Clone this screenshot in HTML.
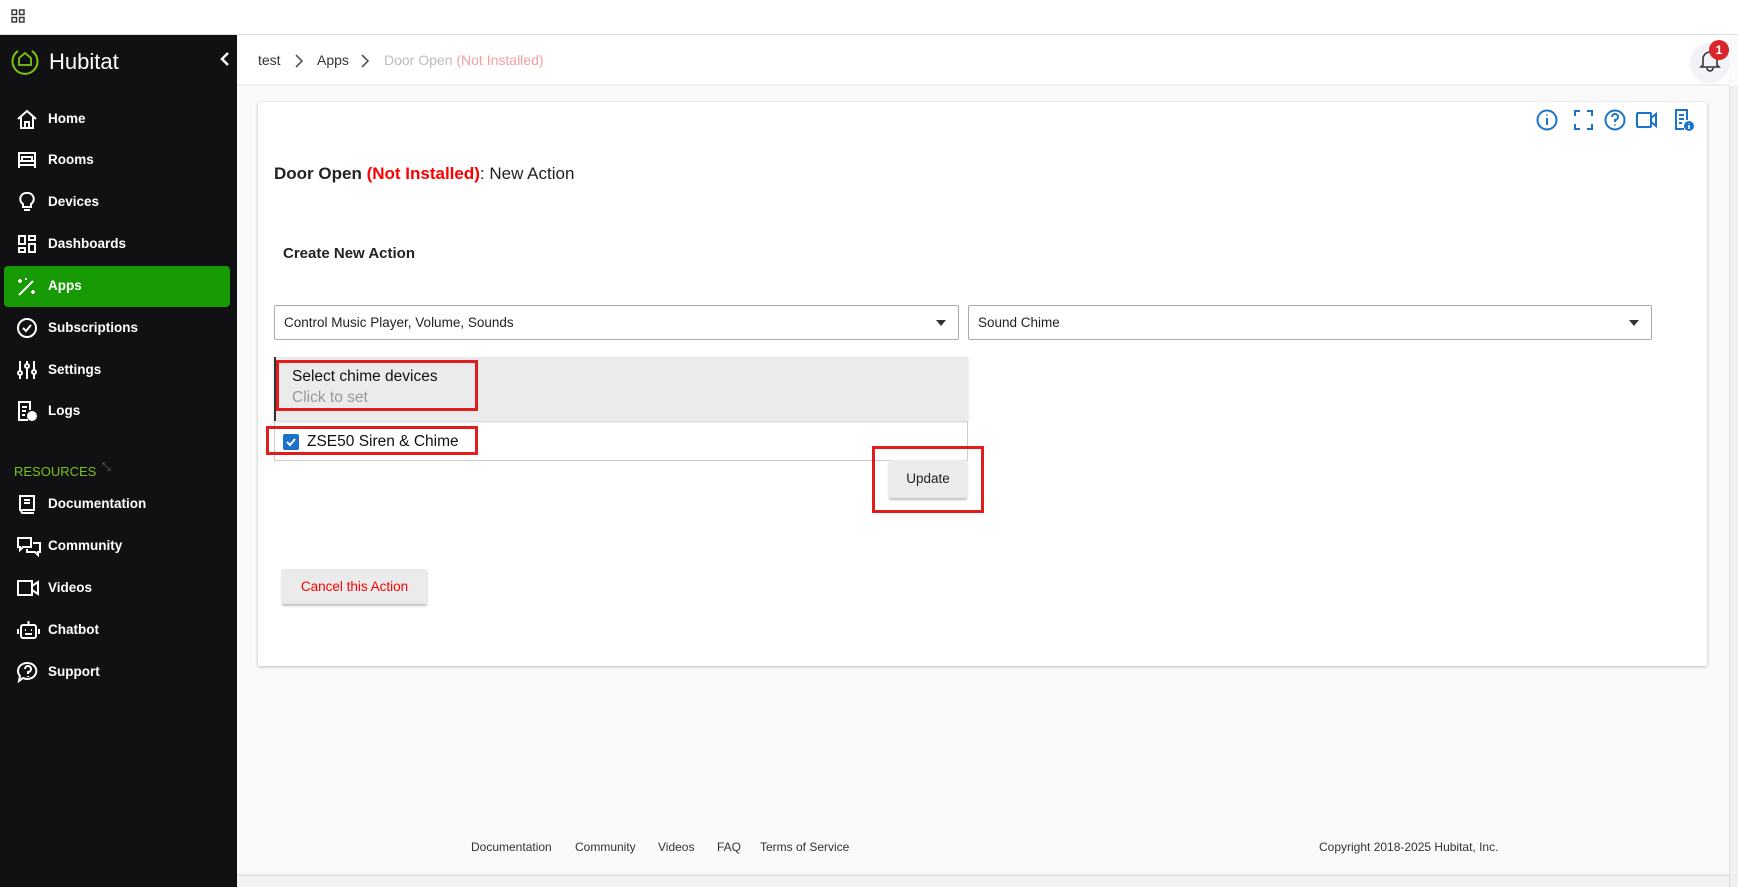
<!DOCTYPE html>
<html><head><meta charset="utf-8"><style>
*{box-sizing:border-box;margin:0;padding:0}
body{width:1738px;height:887px;overflow:hidden;background:#fafafa;font-family:"Liberation Sans",sans-serif;position:relative;color:#222}
.a{position:absolute}
#top{left:0;top:0;width:1738px;height:35px;background:#fff;border-bottom:1px solid #ddd}
#side{left:0;top:35px;width:237px;height:852px;background:#111114;color:#fff}
.nav{position:absolute;left:4px;width:226px;height:41px;border-radius:4px;font-size:13.5px;font-weight:bold;color:#fff}
.nav span{position:absolute;left:44px;top:12px}
.nav svg{position:absolute;left:12px;top:9px}
#hdr{left:237px;top:35px;width:1492px;height:51px;background:#fff;border-bottom:2px solid #eee}
#card{left:258px;top:102px;width:1449px;height:564px;background:#fff;box-shadow:0 1px 3px rgba(0,0,0,.25);border-radius:2px}
.sel{position:absolute;height:35px;border:1px solid #aaa;border-radius:2px;font-size:13.5px;padding:9px 9px}
.sel:after{content:"";position:absolute;right:12px;top:14px;border:5px solid transparent;border-top:6px solid #333}
.btn{position:absolute;background:#ebebeb;box-shadow:0 2px 2px rgba(0,0,0,.25);font-size:13.5px;text-align:center;border-radius:2px}
.red{position:absolute;border:3px solid #e11d1d}
.foot{position:absolute;top:840px;font-size:12px;color:#333}
.ic{stroke:#1a73c8;fill:none;stroke-width:2}
</style></head><body>
<div id="top" class="a"><svg class="a" style="left:11px;top:9px" width="14" height="14" viewBox="0 0 14 14" fill="none" stroke="#333" stroke-width="1.4"><rect x="1" y="1" width="4.5" height="4.5"/><rect x="8.5" y="1" width="4.5" height="4.5"/><rect x="1" y="8.5" width="4.5" height="4.5"/><rect x="8.5" y="8.5" width="4.5" height="4.5"/></svg></div>

<div id="side" class="a">
<svg class="a" style="left:10px;top:11px" width="30" height="30" viewBox="0 0 30 30" fill="none" stroke="#7ac70c" stroke-width="2"><path d="M8 5 A12.5 12.5 0 1 0 22 5"/><path d="M9 19 V12 L15 7 L21 12 V19 Z" stroke-width="1.8"/></svg>
<div class="a" style="left:49px;top:14px;font-size:22px;color:#fff">Hubitat</div>
<svg class="a" style="left:220px;top:16px" width="10" height="16" viewBox="0 0 10 16"><path d="M8 2 L2 8 L8 14" stroke="#fff" stroke-width="2.5" fill="none"/></svg>

<div class="nav" style="top:64px"><svg width="22" height="22" viewBox="0 0 22 22" fill="none" stroke="#fff" stroke-width="2"><path d="M2 11 L11 3 L20 11 M5 9 V20 H17 V9 M9 20 V14 H13 V20"/></svg><span>Home</span></div>
<div class="nav" style="top:105px"><svg width="22" height="22" viewBox="0 0 22 22" fill="none" stroke="#fff" stroke-width="2"><path d="M3 19 V4 H19 V19 M3 12 H19 M3 16 H19 M6 12 V8 H16 V12"/></svg><span>Rooms</span></div>
<div class="nav" style="top:147px"><svg width="22" height="22" viewBox="0 0 22 22" fill="none" stroke="#fff" stroke-width="2"><path d="M11 2 A6 6 0 0 0 7 13 V16 H15 V13 A6 6 0 0 0 11 2 M8 19 H14"/></svg><span>Devices</span></div>
<div class="nav" style="top:189px"><svg width="22" height="22" viewBox="0 0 22 22" fill="none" stroke="#fff" stroke-width="2"><rect x="3" y="3" width="6" height="8"/><rect x="13" y="3" width="6" height="4"/><rect x="3" y="15" width="6" height="4"/><rect x="13" y="11" width="6" height="8"/></svg><span>Dashboards</span></div>
<div class="nav" style="top:231px;background:#169b05"><svg width="22" height="22" viewBox="0 0 22 22" fill="none" stroke="#fff" stroke-width="2"><path d="M3 20 L17 6 M4 4 V8 M2 6 H6 M17 15 V19 M15 17 H19 M10 3 V5"/></svg><span>Apps</span></div>
<div class="nav" style="top:273px"><svg width="22" height="22" viewBox="0 0 22 22" fill="none" stroke="#fff" stroke-width="2"><circle cx="11" cy="11" r="9"/><path d="M7 11 L10 14 L15 8"/></svg><span>Subscriptions</span></div>
<div class="nav" style="top:315px"><svg width="22" height="22" viewBox="0 0 22 22" fill="none" stroke="#fff" stroke-width="2"><path d="M4 2 V20 M11 2 V20 M18 2 V20"/><circle cx="4" cy="14" r="2" fill="#111"/><circle cx="11" cy="7" r="2" fill="#111"/><circle cx="18" cy="13" r="2" fill="#111"/></svg><span>Settings</span></div>
<div class="nav" style="top:356px"><svg width="22" height="22" viewBox="0 0 22 22" fill="none" stroke="#fff" stroke-width="2"><path d="M12 20 H3 V2 H14 V10 M6 7 H11 M6 11 H10 M6 15 H9"/><circle cx="16" cy="16" r="4" fill="#fff"/></svg><span>Logs</span></div>
<div class="a" style="left:14px;top:429px;font-size:13px;color:#78c31a">RESOURCES</div>
<div class="a" style="left:102px;top:426px;color:#666;font-size:11px">⤡</div>
<div class="nav" style="top:449px"><svg width="22" height="22" viewBox="0 0 22 22" fill="none" stroke="#fff" stroke-width="2"><path d="M4 18 V3 H18 V17 H6 A2 2 0 0 0 6 20 H18 M8 7 H14 M8 10 H14"/></svg><span>Documentation</span></div>
<div class="nav" style="top:491px"><svg width="26" height="22" viewBox="0 0 26 22" fill="none" stroke="#fff" stroke-width="2"><path d="M2 3 H15 V12 H7 L4 15 V12 H2 Z M17 8 H24 V17 H22 V20 L19 17 H11 V14"/></svg><span>Community</span></div>
<div class="nav" style="top:533px"><svg width="26" height="22" viewBox="0 0 26 22" fill="none" stroke="#fff" stroke-width="2"><rect x="2" y="4" width="14" height="14"/><path d="M16 9 L22 5 V17 L16 13"/></svg><span>Videos</span></div>
<div class="nav" style="top:575px"><svg width="26" height="22" viewBox="0 0 26 22" fill="none" stroke="#fff" stroke-width="2"><rect x="5" y="6" width="15" height="13" rx="2"/><path d="M12.5 2 V6 M2 10 V15 M23 10 V15"/><path d="M9 11 h1 M15 11 h1 M9 15 H16"/></svg><span>Chatbot</span></div>
<div class="nav" style="top:617px"><svg width="24" height="22" viewBox="0 0 24 22" fill="none" stroke="#fff" stroke-width="2"><path d="M12 2 A9 8 0 1 1 7 17 L3 20 L4 15 A9 8 0 0 1 12 2"/><path d="M9 8 A3 3 0 1 1 12 11 V13 M12 15 V16"/></svg><span>Support</span></div>
</div>

<div id="hdr" class="a">
<div class="a" style="left:21px;top:17px;font-size:14px;color:#333">test</div>
<svg class="a" style="left:57px;top:19px" width="10" height="14" viewBox="0 0 10 14"><path d="M2 1 L8 7 L2 13" stroke="#555" stroke-width="1.6" fill="none"/></svg>
<div class="a" style="left:80px;top:17px;font-size:14px;color:#333">Apps</div>
<svg class="a" style="left:123px;top:19px" width="10" height="14" viewBox="0 0 10 14"><path d="M2 1 L8 7 L2 13" stroke="#555" stroke-width="1.6" fill="none"/></svg>
<div class="a" style="left:147px;top:17px;font-size:14px;color:#bbb">Door Open <span style="color:#f4a0a0">(Not Installed)</span></div>
<div class="a" style="left:1453px;top:8px;width:40px;height:40px;border-radius:50%;background:#f2f2f7"></div>
<svg class="a" style="left:1462px;top:13px" width="22" height="24" viewBox="0 0 22 24" fill="none" stroke="#333" stroke-width="1.6"><path d="M4 17 V11 A7 7 0 0 1 18 11 V17 L20 19 H2 Z M8 20 A3 3 0 0 0 14 20"/></svg>
<div class="a" style="left:1472px;top:5px;width:20px;height:20px;border-radius:50%;background:#d9262b;color:#fff;font-size:12px;font-weight:bold;text-align:center;line-height:20px">1</div>
</div>
<div class="a" style="left:1729px;top:86px;width:9px;height:801px;background:#f0f0f0;border-left:1px solid #ddd"></div>

<div id="card" class="a">
<svg class="a" style="left:1278px;top:6px" width="170" height="24" viewBox="0 0 170 24">
<circle class="ic" cx="11" cy="12" r="9.5"/><path d="M11 10 V17 M11 6.5 V7.5" class="ic"/>
<path class="ic" d="M39 8 V3 H44 M51 3 H56 V8 M56 16 V21 H51 M44 21 H39 V16"/>
<circle class="ic" cx="79" cy="12" r="9.5"/><path class="ic" d="M76 9 A3 3 0 1 1 79 12 V14 M79 16.5 V17.5"/>
<rect class="ic" x="101" y="5" width="14" height="14" rx="1"/><path class="ic" d="M115 10 L120 6 V18 L115 14"/>
<path class="ic" d="M148 21 H140 V2 H151 V12 M143 7 H148 M143 11 H148 M143 15 H146"/><circle cx="153" cy="18" r="5" fill="#1a73c8"/><path d="M153 17 V21 M153 15 V15.5" stroke="#fff" stroke-width="1.6"/>
</svg>
<div class="a" style="left:16px;top:62px;font-size:17px"><b style="color:#222">Door Open</b> <b style="color:#f00">(Not Installed)</b>: New Action</div>
<div class="a" style="left:25px;top:143px;font-size:15px;font-weight:bold;color:#222">Create New Action</div>
<div class="sel" style="left:16px;top:203px;width:685px">Control Music Player, Volume, Sounds</div>
<div class="sel" style="left:710px;top:203px;width:684px">Sound Chime</div>
<div class="a" style="left:16px;top:255px;width:694px;height:64px;background:#ebebeb;border-left:2px solid #333;box-shadow:0 1px 2px rgba(0,0,0,.2)"></div>
<div class="a" style="left:34px;top:266px;font-size:15.5px;color:#111">Select chime devices</div>
<div class="a" style="left:34px;top:287px;font-size:15.5px;color:#999">Click to set</div>
<div class="a" style="left:16px;top:319px;width:694px;height:40px;border:1px solid #ccc;border-top:none"></div>
<div class="a" style="left:25px;top:332px;width:16px;height:16px;background:#1a73c8;border-radius:2px"></div>
<svg class="a" style="left:25px;top:332px" width="16" height="16"><path d="M4 8 L7 11 L12 5" stroke="#fff" stroke-width="2" fill="none"/></svg>
<div class="a" style="left:49px;top:331px;font-size:15.5px;color:#111">ZSE50 Siren &amp; Chime</div>
<div class="btn" style="left:631px;top:358px;width:78px;height:38px;line-height:38px">Update</div>
<div class="btn" style="left:24px;top:467px;width:145px;height:35px;line-height:35px;color:#f00">Cancel this Action</div>
</div>
<div class="red" style="left:276px;top:360px;width:202px;height:51px"></div>
<div class="red" style="left:266px;top:426px;width:212px;height:29px"></div>
<div class="red" style="left:872px;top:446px;width:112px;height:67px"></div>

<div class="foot" style="left:471px">Documentation</div>
<div class="foot" style="left:575px">Community</div>
<div class="foot" style="left:658px">Videos</div>
<div class="foot" style="left:717px">FAQ</div>
<div class="foot" style="left:760px">Terms of Service</div>
<div class="foot" style="left:1319px">Copyright 2018-2025 Hubitat, Inc.</div>
<div class="a" style="left:237px;top:875px;width:1492px;height:12px;background:#f2f2f2;border-top:1px solid #ddd;box-shadow:0 -1px 2px rgba(0,0,0,.08)"></div>
</body></html>
